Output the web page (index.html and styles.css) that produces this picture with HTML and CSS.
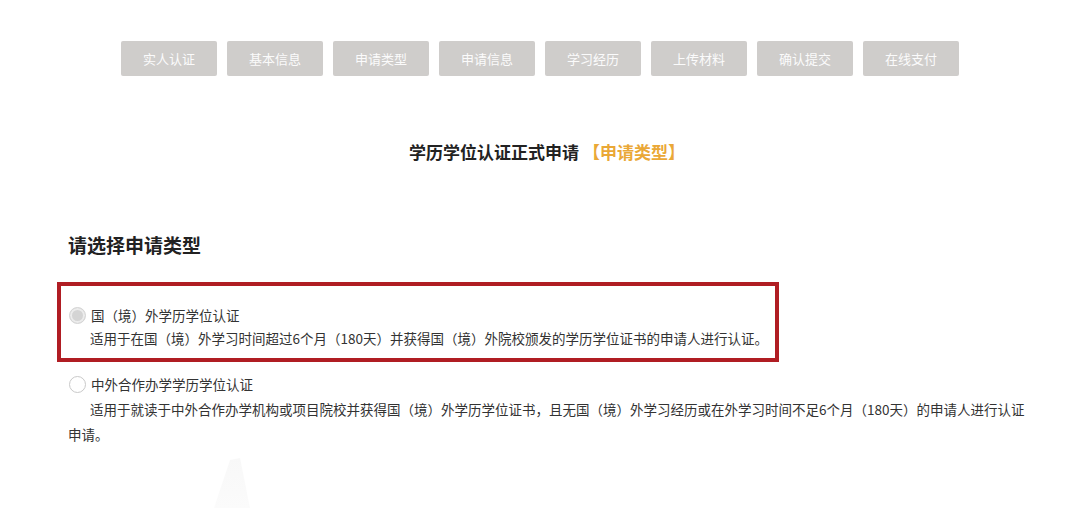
FILE: index.html
```html
<!DOCTYPE html>
<html lang="zh-CN">
<head>
<meta charset="utf-8">
<title>学历学位认证正式申请</title>
<link rel="stylesheet" href="styles.css">
</head>
<body>
<div class="page">
  <nav class="steps">
    <span class="step">实人认证</span>
    <span class="step">基本信息</span>
    <span class="step">申请类型</span>
    <span class="step">申请信息</span>
    <span class="step">学习经历</span>
    <span class="step">上传材料</span>
    <span class="step">确认提交</span>
    <span class="step">在线支付</span>
  </nav>

  <h1 class="title">学历学位认证正式申请 <span class="title-tag">【申请类型】</span></h1>

  <section class="choose">
    <h2 class="choose-heading">请选择申请类型</h2>

    <div class="option option-highlight">
      <label class="option-label"><span class="radio radio-checked"></span>国（境）外学历学位认证</label>
      <p class="option-desc">适用于在国（境）外学习时间超过6个月（180天）并获得国（境）外院校颁发的学历学位证书的申请人进行认证。</p>
    </div>

    <div class="option option-plain">
      <label class="option-label"><span class="radio"></span>中外合作办学学历学位认证</label>
      <p class="option-desc option-desc-loose">适用于就读于中外合作办学机构或项目院校并获得国（境）外学历学位证书，且无国（境）外学习经历或在外学习时间不足6个月（180天）的申请人进行认证申请。</p>
    </div>
  </section>

  <svg class="watermark" width="40" height="50" viewBox="0 0 40 50" aria-hidden="true">
    <defs>
      <linearGradient id="wm" x1="0" y1="0" x2="0" y2="1">
        <stop offset="0" stop-color="#f8f8f8"/>
        <stop offset="1" stop-color="#fbfbfb"/>
      </linearGradient>
    </defs>
    <polygon points="16,2 26,0 36,50 0,50" fill="url(#wm)"/>
  </svg>
</div>
</body>
</html>
```

FILE: styles.css
```css
html, body {
  margin: 0;
  padding: 0;
  background: #ffffff;
}

body {
  font-family: "Noto Sans CJK SC", "Noto Sans", sans-serif;
  color: #333333;
}

.page {
  position: relative;
  width: 1080px;
  height: 508px;
  overflow: hidden;
}

.steps {
  display: flex;
  justify-content: center;
  gap: 10px;
  padding-top: 41px;
}

.step {
  width: 96px;
  height: 35px;
  display: flex;
  align-items: center;
  justify-content: center;
  background: #cfcdcb;
  color: #fbfbfb;
  font-size: 13px;
  border-radius: 2px;
}

.title {
  margin: 64px 0 0;
  padding-left: 14px;
  text-align: center;
  font-size: 17px;
  line-height: 24px;
  font-weight: 700;
  color: #222222;
}

.title-tag {
  color: #eaa837;
}

.choose {
  padding-left: 68px;
  width: 962px;
}

.choose-heading {
  margin: 67px 0 0;
  font-size: 19px;
  line-height: 28px;
  font-weight: 700;
  color: #222222;
}

.option {
  font-size: 13.5px;
}

.option-highlight {
  box-sizing: border-box;
  width: 722px;
  margin: 23px 0 0 -11px;
  padding: 18px 0 8px 7px;
  border: 4px solid #b01d23;
}

.option-plain {
  margin-top: 11px;
}

.option-label {
  display: flex;
  align-items: center;
  line-height: 23px;
  color: #333333;
}

.radio {
  box-sizing: border-box;
  width: 17px;
  height: 17px;
  margin: 0 5px 0 1px;
  border-radius: 50%;
  border: 1px solid #c9c9c9;
  background: #ffffff;
  flex: none;
}

.radio-checked {
  background: #d4d4d4;
  box-shadow: inset 0 0 0 2px #ececec;
  border-color: #d6d6d6;
}

.option-desc {
  margin: 0;
  text-indent: 22px;
  line-height: 23px;
  color: #333333;
}

.option-desc-loose {
  margin-top: 1px;
  line-height: 25px;
}

.watermark {
  position: absolute;
  left: 214px;
  top: 458px;
}
```
